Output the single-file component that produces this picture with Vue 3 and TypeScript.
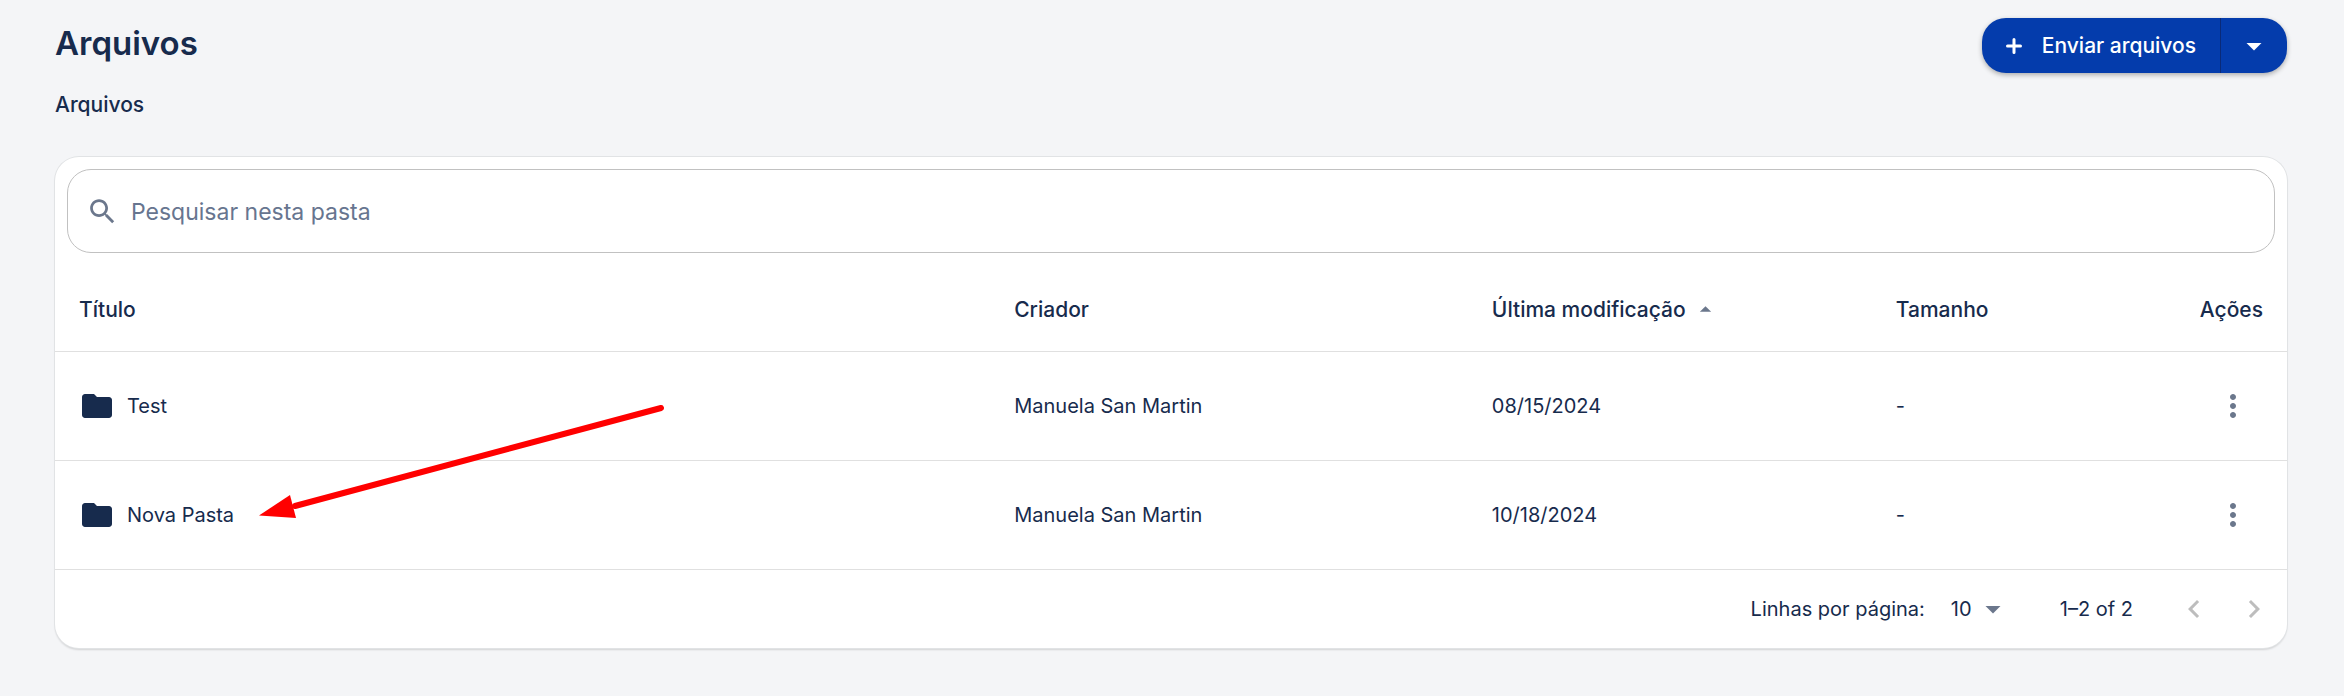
<script setup lang="ts">
import { ref } from 'vue'

interface FileEntry {
  name: string
  creator: string
  modified: string
  size: string
}

const search = ref('')
const perPage = ref('10')
const entries: FileEntry[] = [
  { name: 'Test', creator: 'Manuela San Martin', modified: '08/15/2024', size: '-' },
  { name: 'Nova Pasta', creator: 'Manuela San Martin', modified: '10/18/2024', size: '-' },
]
</script>

<template>
  <main class="page">
    <header class="top">
      <div>
        <h1>Arquivos</h1>
        <nav class="crumbs" aria-label="Navegação">Arquivos</nav>
      </div>
      <div class="split">
        <button type="button" class="upload">
          <svg class="plus" viewBox="0 0 16 16" aria-hidden="true"><path d="M8 1.500v13M1.500 8h13" /></svg>
          Enviar arquivos
        </button>
        <button type="button" class="more" aria-label="Mais opções de envio">
          <svg class="icon" viewBox="0 0 24 24" aria-hidden="true"><path d="m7 10 5 5 5-5z" /></svg>
        </button>
      </div>
    </header>

    <section class="card">
      <label class="search">
        <svg class="glass" viewBox="0 0 24 24" aria-hidden="true">
          <path d="M15.5 14h-.79l-.28-.27C15.41 12.59 16 11.11 16 9.5 16 5.91 13.09 3 9.5 3S3 5.91 3 9.5 5.910 16 9.5 16c1.61 0 3.09-.59 4.23-1.57l.27.28v.79l5 4.990L20.49 19l-4.99-5zm-6 0C7.010 14 5 11.99 5 9.5S7.010 5 9.5 5 14 7.010 14 9.5 11.99 14 9.5 14z" />
        </svg>
        <input v-model="search" type="text" placeholder="Pesquisar nesta pasta" aria-label="Pesquisar nesta pasta" />
      </label>

      <table>
        <colgroup>
          <col class="c-title" />
          <col class="c-creator" />
          <col class="c-date" />
          <col class="c-size" />
          <col />
        </colgroup>
        <thead>
          <tr>
            <th scope="col">Título</th>
            <th scope="col">Criador</th>
            <th scope="col" aria-sort="ascending">
              <button type="button" class="sort">
                Última modificação
                <svg class="sort-icon" viewBox="0 0 24 24" aria-hidden="true"><path d="m7 14 5-5 5 5z" /></svg>
              </button>
            </th>
            <th scope="col">Tamanho</th>
            <th scope="col" class="end">Ações</th>
          </tr>
        </thead>
        <tbody>
          <tr v-for="entry in entries" :key="entry.name">
            <td>
              <div class="name">
                <svg class="icon" viewBox="0 0 24 24" aria-hidden="true">
                  <path d="M10 4H4c-1.1 0-1.99.9-1.99 2L2 18c0 1.1.9 2 2 2h16c1.1 0 2-.9 2-2V8c0-1.1-.9-2-2-2h-8l-2-2z" />
                </svg>
                <span>{{ entry.name }}</span>
              </div>
            </td>
            <td>{{ entry.creator }}</td>
            <td>{{ entry.modified }}</td>
            <td>{{ entry.size }}</td>
            <td class="end">
              <button type="button" class="icon-btn" :aria-label="'Ações de ' + entry.name">
                <svg class="icon" viewBox="0 0 24 24" aria-hidden="true">
                  <path d="M12 8c1.1 0 2-.9 2-2s-.9-2-2-2-2 .9-2 2 .9 2 2 2zm0 2c-1.1 0-2 .9-2 2s.9 2 2 2 2-.9 2-2-.9-2-2-2zm0 6c-1.1 0-2 .9-2 2s.9 2 2 2 2-.9 2-2-.9-2-2-2z" />
                </svg>
              </button>
            </td>
          </tr>
        </tbody>
      </table>

      <footer class="pager">
        <label for="per-page">Linhas por página:</label>
        <div class="select">
          <select id="per-page" v-model="perPage">
            <option>10</option>
            <option>25</option>
            <option>50</option>
          </select>
          <svg class="icon select-icon" viewBox="0 0 24 24" aria-hidden="true"><path d="m7 10 5 5 5-5z" /></svg>
        </div>
        <span class="count">1–2 of 2</span>
        <button type="button" class="icon-btn" disabled aria-label="Página anterior">
          <svg class="icon" viewBox="0 0 24 24" aria-hidden="true"><path d="M15.41 16.59 10.83 12l4.58-4.59L14 6l-6 6 6 6z" /></svg>
        </button>
        <button type="button" class="icon-btn" disabled aria-label="Próxima página">
          <svg class="icon" viewBox="0 0 24 24" aria-hidden="true"><path d="M8.59 16.59 13.17 12 8.59 7.41 10 6l6 6-6 6z" /></svg>
        </button>
      </footer>

      <svg class="pointer" viewBox="0 0 410 116" aria-hidden="true">
        <path class="shaft" d="M36 106 402 8" />
        <path class="head" d="M0 115.500 31 95l6 23z" />
      </svg>
    </section>
  </main>
</template>

<style>
body {
  background: #f4f5f7;
}
</style>

<style scoped>
.page {
  padding: 18px 57px 48px 55px;
  color: #172b4d;
  font-family: Inter, "Liberation Sans", sans-serif;
  font-size: 20px;
  line-height: 32px;
}

.top {
  display: flex;
  justify-content: space-between;
  align-items: flex-start;
  margin-bottom: 36px;
}

h1 {
  margin: 0 0 21px;
  font-size: 33px;
  font-weight: 600;
  line-height: 50px;
}

.crumbs {
  font-size: 21px;
  font-weight: 500;
}

button,
input,
select {
  margin: 0;
  border: 0;
  background: none;
  color: inherit;
  font: inherit;
}

button {
  cursor: pointer;
}

svg {
  display: block;
  flex: none;
  fill: currentColor;
}

.icon {
  width: 36px;
  height: 36px;
}

.split {
  display: flex;
  height: 55px;
  border-radius: 24px;
  background: #043cac;
  box-shadow: 0 2px 5px rgba(0, 0, 0, 0.3);
  color: #fff;
}

.upload {
  display: flex;
  align-items: center;
  gap: 20px;
  padding: 0 24px;
  border-right: 1px solid #0a2a78;
  font-size: 21px;
  font-weight: 500;
}

.plus {
  width: 16px;
  height: 16px;
  fill: none;
  stroke: currentColor;
  stroke-width: 3;
  stroke-linecap: round;
}

.more {
  padding: 0 15px;
}

.card {
  position: relative;
  border-radius: 24px;
  background: #fff;
  box-shadow: 0 0 0 1px #e1e3e5, 0 2px 2px rgba(0, 0, 0, 0.14);
}

.card::before {
  content: "";
  display: block;
  height: 12px;
}

.search {
  display: flex;
  align-items: center;
  gap: 12px;
  height: 84px;
  box-sizing: border-box;
  margin: 0 12px;
  padding: 0 18px;
  border: 1px solid #c1c1c1;
  border-radius: 24px;
  font-size: 23px;
}

.glass {
  width: 33px;
  height: 33px;
  color: #6b778c;
}

.search input {
  flex: 1;
  min-width: 0;
  padding: 2px 0 0;
  outline: 0;
}

.search input::placeholder {
  color: #67758f;
  opacity: 1;
}

table {
  width: 100%;
  border-collapse: collapse;
  table-layout: fixed;
}

.c-title {
  width: 41.9%;
}

.c-creator {
  width: 21.4%;
}

.c-date {
  width: 18.1%;
}

.c-size {
  width: 10%;
}

th,
td {
  padding: 0 24px;
  border-bottom: 1px solid #e0e0e0;
  text-align: left;
}

th {
  height: 98px;
  padding-top: 16px;
  box-sizing: border-box;
  font-size: 21px;
  font-weight: 500;
}

td {
  height: 108px;
}

.end {
  text-align: right;
}

.sort {
  display: flex;
  align-items: center;
  gap: 6px;
  padding: 0;
}

.sort-icon {
  width: 27px;
  height: 27px;
  color: #6b778c;
}

.name {
  display: flex;
  align-items: center;
  gap: 12px;
}

.icon-btn {
  display: inline-block;
  padding: 12px;
  color: #6b778c;
  vertical-align: middle;
}

.icon-btn:disabled {
  color: #bdbdbd;
}

.pager {
  display: flex;
  align-items: center;
  justify-content: flex-end;
  height: 78px;
  padding-right: 3px;
}

.select {
  display: flex;
  align-items: center;
  position: relative;
  margin: 0 49px 0 26px;
}

.select select {
  width: 60px;
  padding: 0;
  appearance: none;
}

.select-icon {
  position: absolute;
  right: 0;
  color: #6b778c;
  pointer-events: none;
}

.count {
  margin-right: 31px;
}

.pointer {
  position: absolute;
  top: 243px;
  left: 204px;
  width: 410px;
  height: 116px;
  overflow: visible;
}

.shaft {
  stroke: #f00;
  stroke-width: 6;
  stroke-linecap: round;
}

.head {
  fill: #f00;
}
</style>
